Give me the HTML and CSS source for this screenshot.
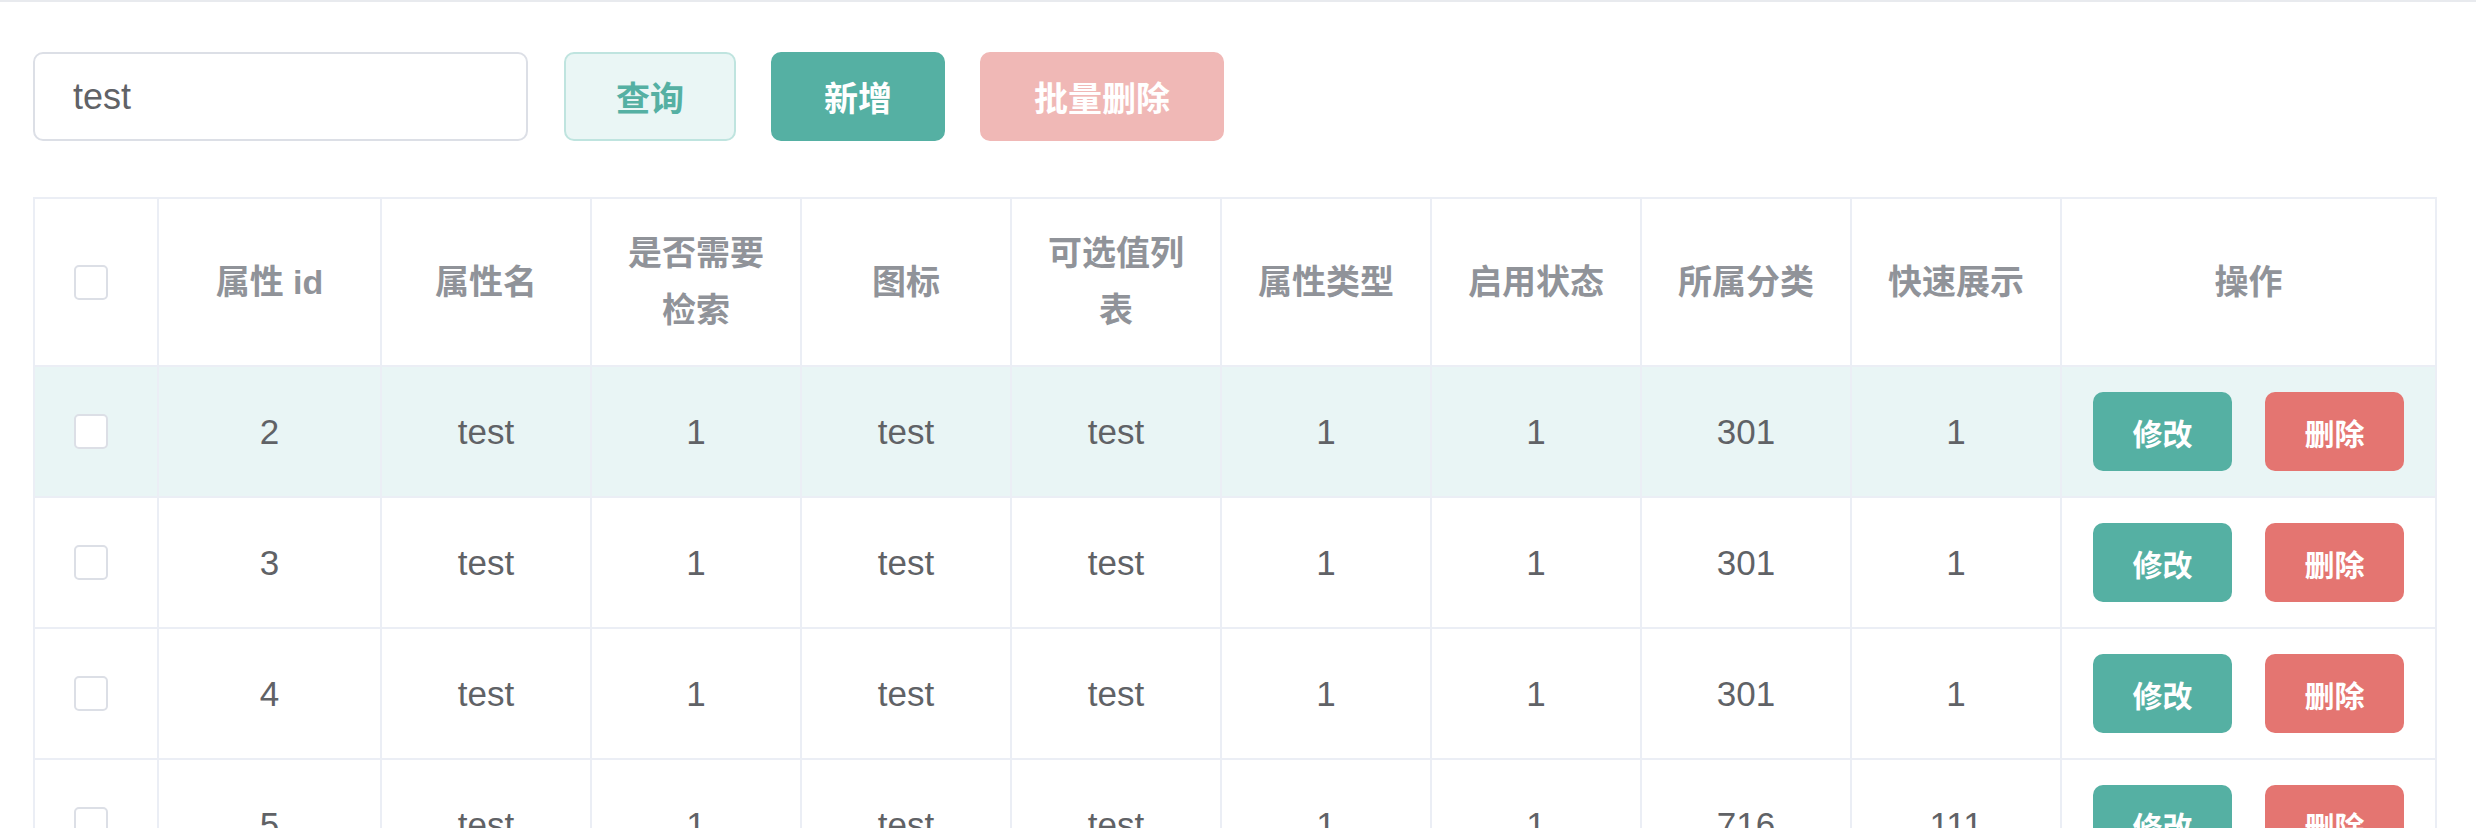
FILE: index.html
```html
<!DOCTYPE html>
<html lang="zh-CN">
<head>
<meta charset="utf-8">
<title>属性管理</title>
<link rel="stylesheet" href="styles.css">
</head>
<body>
<div class="topline"></div>
<main class="page">
  <div class="toolbar">
    <div class="input"><span class="input-text">test</span></div>
    <button class="btn btn-plain">查询</button>
    <button class="btn btn-primary">新增</button>
    <button class="btn btn-danger-disabled">批量删除</button>
  </div>

  <div class="table">
    <div class="row head">
      <div class="cell sel"><span class="checkbox"></span></div>
      <div class="cell">属性 id</div>
      <div class="cell">属性名</div>
      <div class="cell">是否需要检索</div>
      <div class="cell">图标</div>
      <div class="cell">可选值列表</div>
      <div class="cell">属性类型</div>
      <div class="cell">启用状态</div>
      <div class="cell">所属分类</div>
      <div class="cell">快速展示</div>
      <div class="cell">操作</div>
    </div>
    <div class="row body hover">
      <div class="cell sel"><span class="checkbox"></span></div>
      <div class="cell">2</div><div class="cell">test</div><div class="cell">1</div><div class="cell">test</div><div class="cell">test</div><div class="cell">1</div><div class="cell">1</div><div class="cell">301</div><div class="cell">1</div>
      <div class="cell ops"><button class="sbtn sbtn-edit">修改</button><button class="sbtn sbtn-del">删除</button></div>
    </div>
    <div class="row body">
      <div class="cell sel"><span class="checkbox"></span></div>
      <div class="cell">3</div><div class="cell">test</div><div class="cell">1</div><div class="cell">test</div><div class="cell">test</div><div class="cell">1</div><div class="cell">1</div><div class="cell">301</div><div class="cell">1</div>
      <div class="cell ops"><button class="sbtn sbtn-edit">修改</button><button class="sbtn sbtn-del">删除</button></div>
    </div>
    <div class="row body">
      <div class="cell sel"><span class="checkbox"></span></div>
      <div class="cell">4</div><div class="cell">test</div><div class="cell">1</div><div class="cell">test</div><div class="cell">test</div><div class="cell">1</div><div class="cell">1</div><div class="cell">301</div><div class="cell">1</div>
      <div class="cell ops"><button class="sbtn sbtn-edit">修改</button><button class="sbtn sbtn-del">删除</button></div>
    </div>
    <div class="row body">
      <div class="cell sel"><span class="checkbox"></span></div>
      <div class="cell">5</div><div class="cell">test</div><div class="cell">1</div><div class="cell">test</div><div class="cell">test</div><div class="cell">1</div><div class="cell">1</div><div class="cell">716</div><div class="cell">111</div>
      <div class="cell ops"><button class="sbtn sbtn-edit">修改</button><button class="sbtn sbtn-del">删除</button></div>
    </div>
  </div>
</main>
</body>
</html>
```
FILE: styles.css
```css
* { box-sizing: border-box; }
html, body {
  margin: 0;
  padding: 0;
  background: #ffffff;
  font-family: "Liberation Sans", "Noto Sans CJK SC", sans-serif;
  color: #606266;
  overflow: hidden;
}
.topline {
  height: 2px;
  background: #e8eaee;
}
.page {
  padding: 50px 40px 0 33px;
}
.toolbar {
  display: flex;
  align-items: center;
  height: 89px;
}
.input {
  width: 495px;
  height: 89px;
  border: 2px solid #dcdfe6;
  border-radius: 10px;
  display: flex;
  align-items: center;
  padding-left: 38px;
  margin-right: 36px;
}
.input-text {
  font-size: 36px;
  color: #606266;
}
.btn {
  height: 89px;
  border-radius: 10px;
  border: 2px solid transparent;
  font-family: "Liberation Sans", "Noto Sans CJK SC", sans-serif;
  font-size: 34px;
  font-weight: 700;
  padding: 0;
  margin-right: 35px;
  color: #ffffff;
  cursor: pointer;
}
.btn-plain {
  background: #eaf6f5;
  border-color: #bfe4df;
  color: #55b0a3;
  width: 172px;
}
.btn-primary {
  background: #55b0a3;
  border-color: #55b0a3;
  width: 174px;
}
.btn-danger-disabled {
  background: #f0b8b6;
  border-color: #f0b8b6;
  width: 244px;
}

.table {
  margin-top: 56px;
  width: 2404px;
  display: grid;
  grid-template-columns: 124px 223px repeat(8, 210px) 375px;
  border-top: 2px solid #ebeef5;
  border-left: 2px solid #ebeef5;
}
.row { display: contents; }
.cell {
  border-right: 2px solid #ebeef5;
  border-bottom: 2px solid #ebeef5;
  display: flex;
  align-items: center;
  justify-content: center;
  text-align: center;
  padding: 0 24px;
  background: #ffffff;
}
.head .cell {
  height: 168px;
  font-size: 34px;
  line-height: 57px;
  font-weight: 700;
  color: #909399;
}
.body .cell {
  height: 131px;
  font-size: 35px;
  color: #606266;
}
.hover .cell { background: #e9f5f5; }
.cell.sel { padding: 0 10px 0 0; }
.checkbox {
  display: block;
  width: 34px;
  height: 35px;
  border: 2px solid #dcdfe6;
  border-radius: 5px;
  background: #ffffff;
}
.cell.ops { gap: 33px; padding: 0; }
.sbtn {
  width: 139px;
  height: 79px;
  border: none;
  border-radius: 10px;
  color: #ffffff;
  font-family: "Liberation Sans", "Noto Sans CJK SC", sans-serif;
  font-size: 30px;
  font-weight: 700;
  padding: 0;
}
.sbtn-edit { background: #55b0a3; }
.sbtn-del { background: #e47571; }
```
